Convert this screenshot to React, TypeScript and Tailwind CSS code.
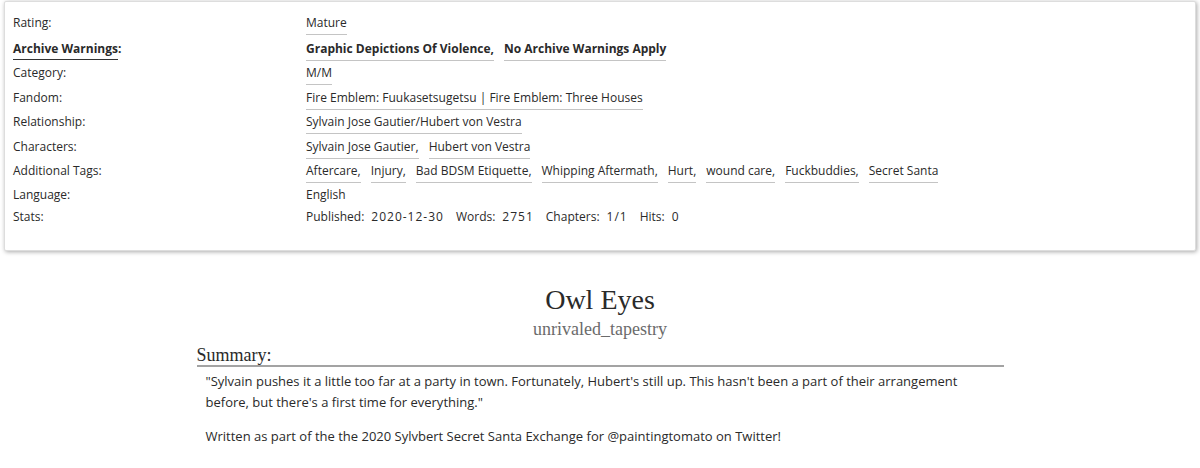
import React from "react";

const sans = "font-['Open_Sans','Noto_Sans','DejaVu_Sans',sans-serif]";
const serif = "font-['Liberation_Serif','Times_New_Roman',serif]";

function Tag({ children, last }: { children: React.ReactNode; last?: boolean }) {
  return (
    <span className="border-b border-[#c4c4c4] pb-[2px]">
      {children}
      {last ? "" : ","}
    </span>
  );
}

function TagList({ items, bold }: { items: string[]; bold?: boolean }) {
  return (
    <div className={`flex flex-wrap gap-x-[10px] ${bold ? "font-bold" : ""}`}>
      {items.map((t, i) => (
        <Tag key={t} last={i === items.length - 1}>
          {t}
        </Tag>
      ))}
    </div>
  );
}

function Stat({ name, value }: { name: string; value: string }) {
  return (
    <span>
      {name}:<span className="ml-[7px] tracking-[1px]">{value}</span>
    </span>
  );
}

type Row = { label: string; h: string; bold?: boolean; value: React.ReactNode };

export default function App() {
  const rows: Row[] = [
    { label: "Rating", h: "h-[26px]", value: <TagList items={["Mature"]} /> },
    {
      label: "Archive Warnings",
      h: "h-[24px]",
      bold: true,
      value: <TagList bold items={["Graphic Depictions Of Violence", "No Archive Warnings Apply"]} />,
    },
    { label: "Category", h: "h-[25px]", value: <TagList items={["M/M"]} /> },
    {
      label: "Fandom",
      h: "h-[24px]",
      value: <TagList items={["Fire Emblem: Fuukasetsugetsu | Fire Emblem: Three Houses"]} />,
    },
    {
      label: "Relationship",
      h: "h-[25px]",
      value: <TagList items={["Sylvain Jose Gautier/Hubert von Vestra"]} />,
    },
    {
      label: "Characters",
      h: "h-[24px]",
      value: <TagList items={["Sylvain Jose Gautier", "Hubert von Vestra"]} />,
    },
    {
      label: "Additional Tags",
      h: "h-[24px]",
      value: (
        <TagList
          items={[
            "Aftercare",
            "Injury",
            "Bad BDSM Etiquette",
            "Whipping Aftermath",
            "Hurt",
            "wound care",
            "Fuckbuddies",
            "Secret Santa",
          ]}
        />
      ),
    },
    { label: "Language", h: "h-[22px]", value: <span>English</span> },
    {
      label: "Stats",
      h: "h-[22px]",
      value: (
        <div className="flex gap-x-[12px]">
          <Stat name="Published" value="2020-12-30" />
          <Stat name="Words" value="2751" />
          <Stat name="Chapters" value="1/1" />
          <Stat name="Hits" value="0" />
        </div>
      ),
    },
  ];

  return (
    <div className={`min-h-[468px] w-[1200px] bg-white text-[#2a2a2a] ${sans}`}>
      {/* work meta block */}
      <div className="mx-[4px] mt-[1px] rounded-[2px] border border-[#dddddd] bg-white pt-[12px] pb-[20px] pl-[8px] shadow-[1px_1px_4px_#aaaaaa] text-[12px] leading-[18px]">
        {rows.map((r) => (
          <div key={r.label} className={`flex ${r.h}`}>
            <div className="w-[293px] shrink-0">
              {r.bold ? (
                <span className="font-bold">
                  <span className="border-b border-[#333] pb-[2px]">{r.label}</span>:
                </span>
              ) : (
                <span>{r.label}:</span>
              )}
            </div>
            <div className="flex-1">{r.value}</div>
          </div>
        ))}
      </div>

      {/* title and summary */}
      <div className="mt-[33px] flex flex-col items-center">
        <h2 className={`${serif} text-[28px] leading-[32px] text-[#2a2a2a]`}>Owl Eyes</h2>
        <div className={`${serif} mt-[2px] text-[18px] leading-[22px] text-[#6b6b6b]`}>
          unrivaled_tapestry
        </div>
      </div>
      <div className="mx-auto mt-[5px] w-[807px]">
        <h3
          className={`${serif} border-b-2 border-[#a3a3a3] text-[18px] leading-[20px] text-[#2a2a2a]`}
        >
          Summary:
        </h3>
        <div className="mt-[4px] ml-[9px] text-[13px] leading-[21px]">
          <p>
            "Sylvain pushes it a little too far at a party in town. Fortunately, Hubert's still up. This
            hasn't been a part of their arrangement before, but there's a first time for everything."
          </p>
          <p className="mt-[13px]">
            Written as part of the the 2020 Sylvbert Secret Santa Exchange for @paintingtomato on
            Twitter!
          </p>
        </div>
      </div>
    </div>
  );
}
